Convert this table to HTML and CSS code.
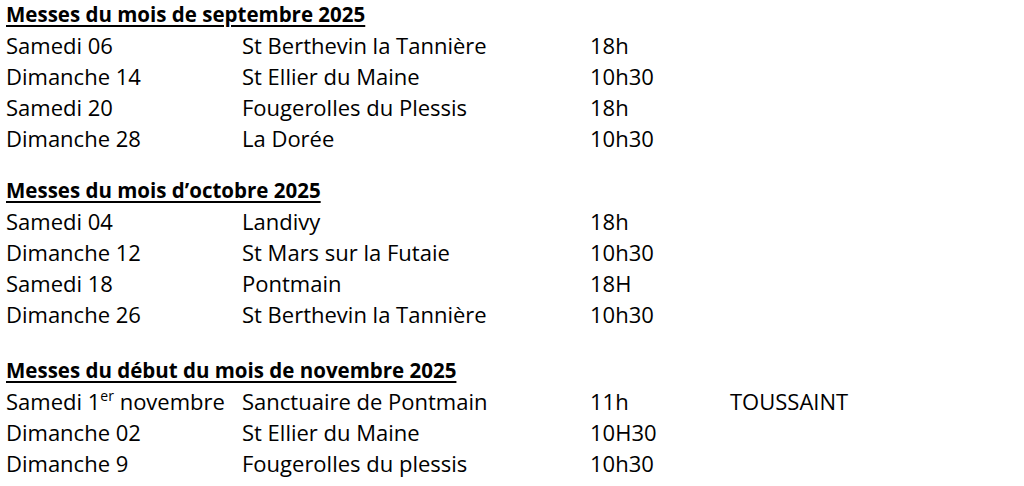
FILE: index.html
```html
<!DOCTYPE html>
<html lang="fr">
<head>
<meta charset="utf-8">
<link rel="stylesheet" href="styles.css">
</head>
<body>
<div class="page">
  <section class="month">
    <h2 class="title">Messes du mois de septembre 2025</h2>
    <div class="grid">
      <span>Samedi 06</span><span>St Berthevin la Tannière</span><span>18h</span><span></span>
      <span>Dimanche 14</span><span>St Ellier du Maine</span><span>10h30</span><span></span>
      <span>Samedi 20</span><span>Fougerolles du Plessis</span><span>18h</span><span></span>
      <span>Dimanche 28</span><span>La Dorée</span><span>10h30</span><span></span>
    </div>
  </section>
  <section class="month m2">
    <h2 class="title">Messes du mois d’octobre 2025</h2>
    <div class="grid">
      <span>Samedi 04</span><span>Landivy</span><span>18h</span><span></span>
      <span>Dimanche 12</span><span>St Mars sur la Futaie</span><span>10h30</span><span></span>
      <span>Samedi 18</span><span>Pontmain</span><span>18H</span><span></span>
      <span>Dimanche 26</span><span>St Berthevin la Tannière</span><span>10h30</span><span></span>
    </div>
  </section>
  <section class="month m3">
    <h2 class="title">Messes du début du mois de novembre 2025</h2>
    <div class="grid">
      <span>Samedi 1<sup>er</sup> novembre</span><span>Sanctuaire de Pontmain</span><span>11h</span><span>TOUSSAINT</span>
      <span>Dimanche 02</span><span>St Ellier du Maine</span><span>10H30</span><span></span>
      <span>Dimanche 9</span><span>Fougerolles du plessis</span><span>10h30</span><span></span>
    </div>
  </section>
</div>
</body>
</html>
```

FILE: styles.css
```css
html, body {
  margin: 0;
  padding: 0;
  background: #fff;
}
.page {
  margin-top: -1px;
  padding-left: 6px;
  font-family: "Open Sans", "Noto Sans", sans-serif;
  color: #000;
}
.month.m2 { margin-top: 21px; }
.month.m3 { margin-top: 25px; }
.title {
  margin: 0;
  font-size: 20.5px;
  font-weight: 700;
  line-height: 31px;
  text-decoration: underline;
  text-decoration-thickness: 2px;
  text-underline-offset: 3px;
}
.grid {
  display: grid;
  grid-template-columns: 236px 348px 140px auto;
  font-size: 22px;
  line-height: 31px;
  white-space: nowrap;
}
.grid sup {
  font-size: 14px;
  line-height: 0;
  vertical-align: 9px;
}
```
